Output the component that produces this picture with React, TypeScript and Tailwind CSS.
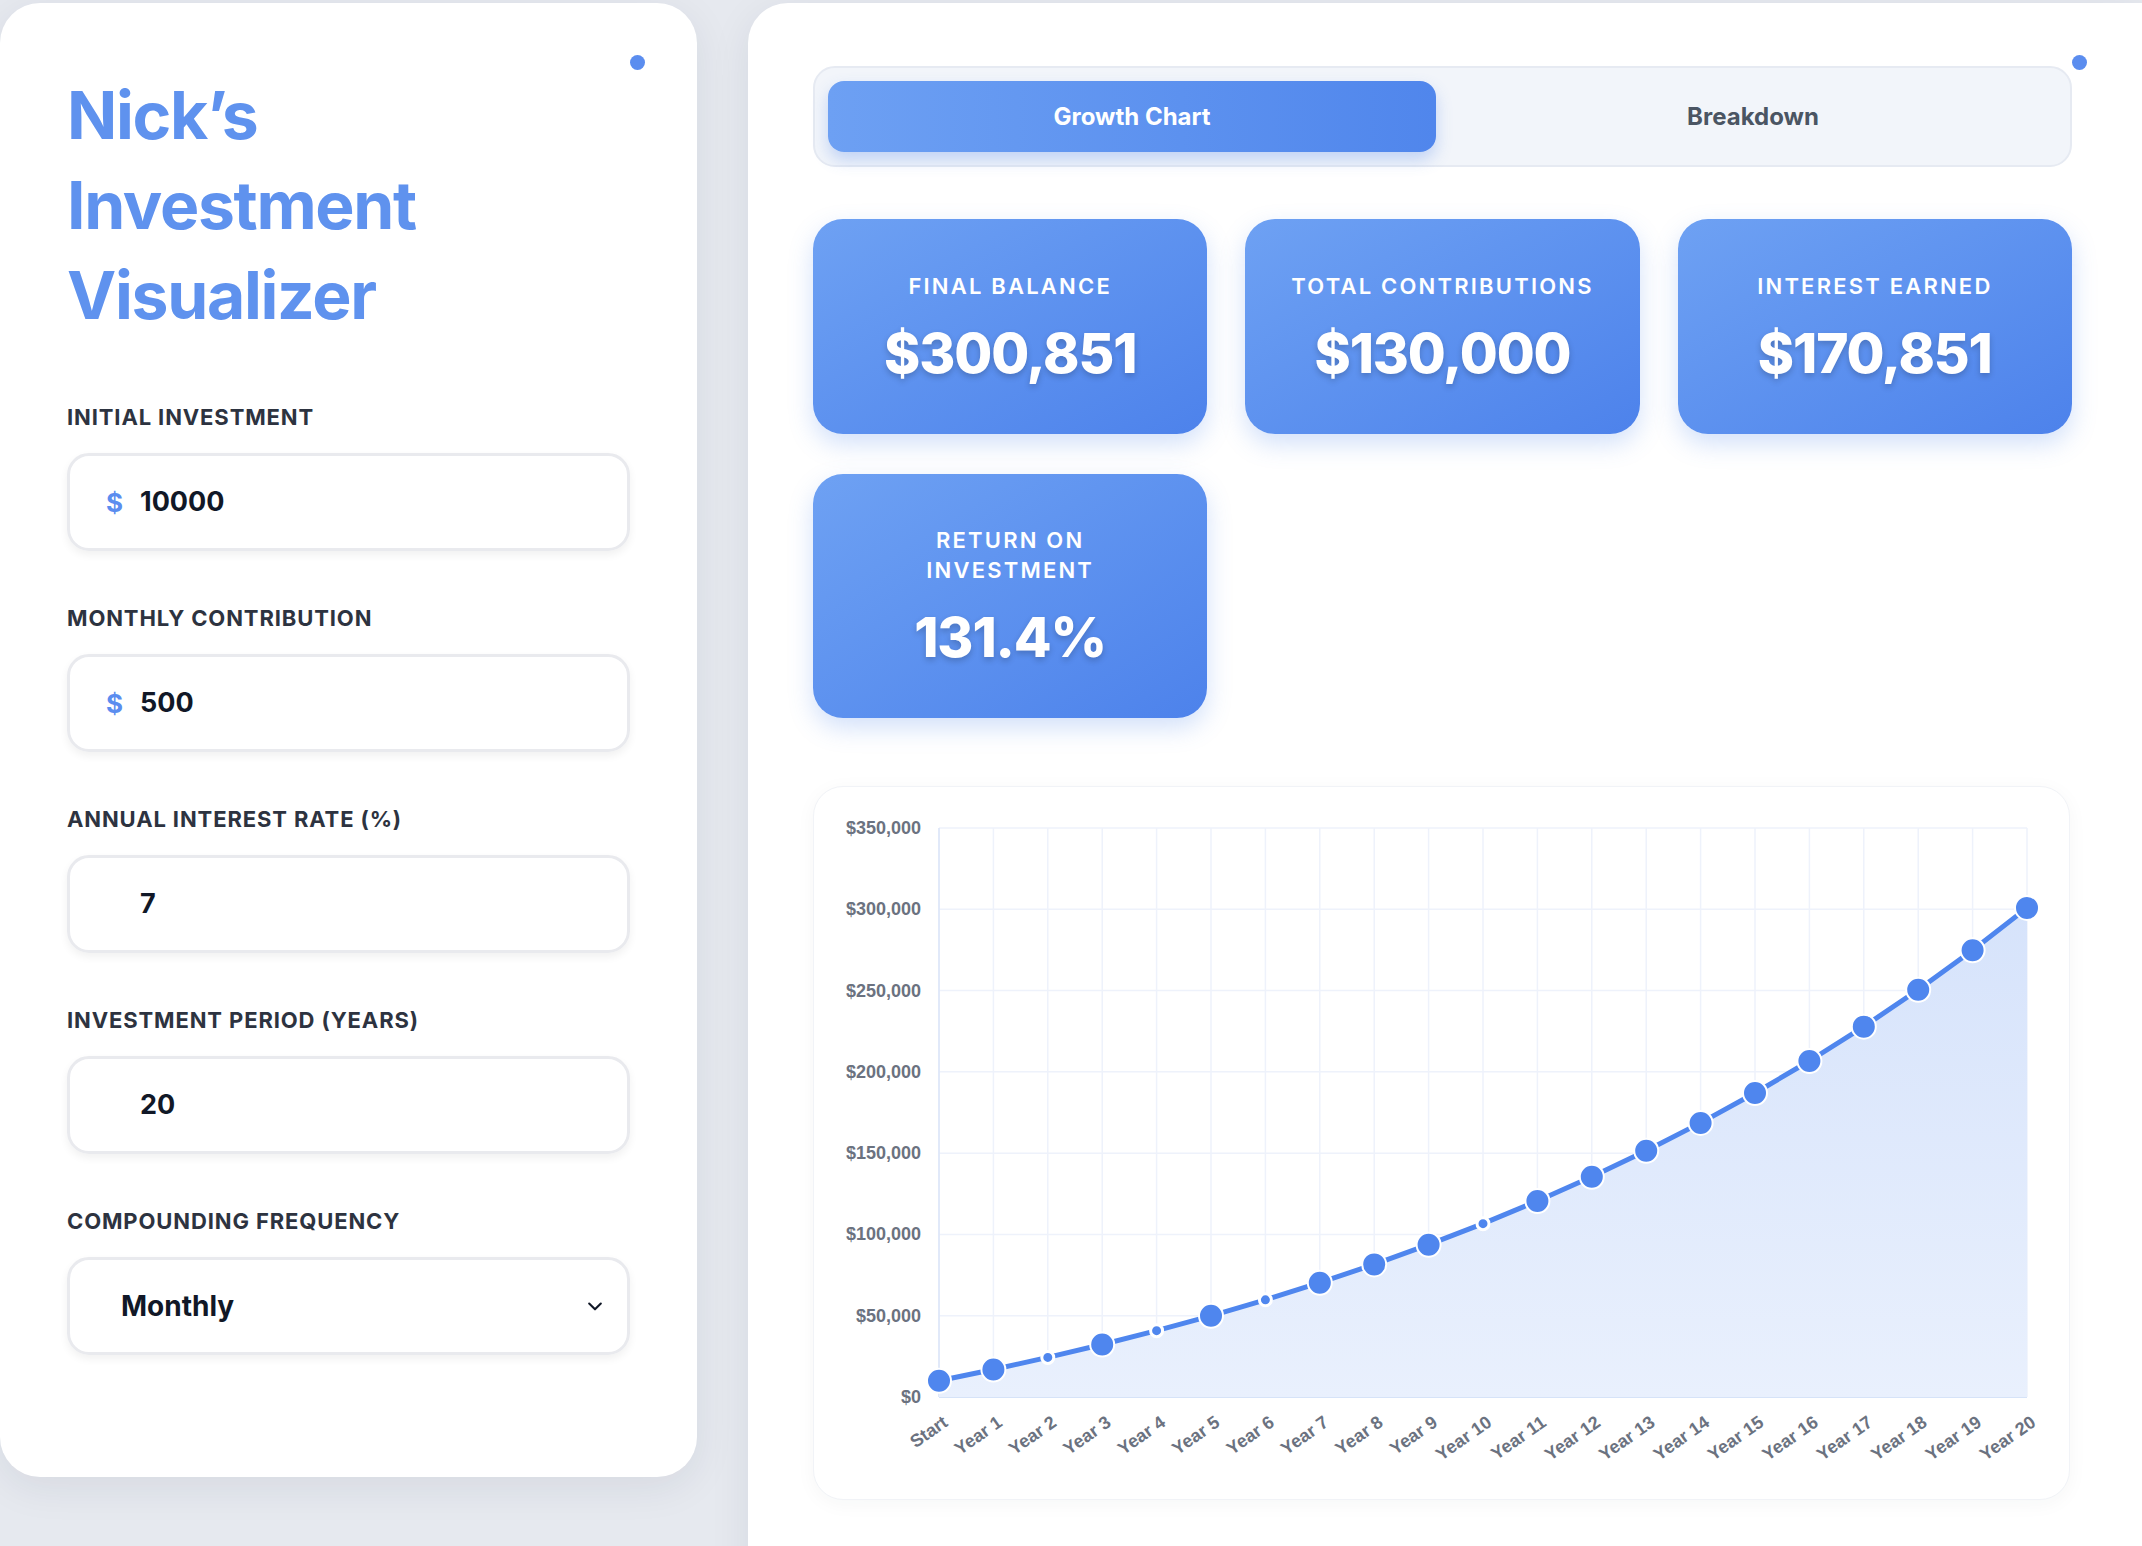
import React from 'react'

const font = { fontFamily: 'Inter, "Noto Sans", sans-serif' }

const fields = [
  { label: 'Initial Investment', value: '10000', dollar: true },
  { label: 'Monthly Contribution', value: '500', dollar: true },
  { label: 'Annual Interest Rate (%)', value: '7', dollar: false },
  { label: 'Investment Period (Years)', value: '20', dollar: false },
]

const stats = [
  { label: 'Final Balance', value: '$300,851' },
  { label: 'Total Contributions', value: '$130,000' },
  { label: 'Interest Earned', value: '$170,851' },
  { label: 'Return on Investment', value: '131.4%' },
]

function balanceAt(year: number) {
  const r = 0.07 / 12
  const n = year * 12
  const g = Math.pow(1 + r, n)
  return 10000 * g + 500 * ((g - 1) / r)
}

function Chart() {
  const W = 1257
  const H = 714
  const x0 = 125
  const x1 = 1213
  const yTop = 41
  const yBot = 610
  const max = 350000
  const pts = Array.from({ length: 21 }, (_, i) => ({
    x: x0 + ((x1 - x0) * i) / 20,
    y: yBot - ((yBot - yTop) * balanceAt(i)) / max,
    label: i === 0 ? 'Start' : `Year ${i}`,
    small: [2, 4, 6, 10].includes(i),
  }))
  const line = pts.map((p, i) => `${i ? 'L' : 'M'}${p.x.toFixed(1)},${p.y.toFixed(1)}`).join(' ')
  const area = `${line} L${x1},${yBot} L${x0},${yBot} Z`
  const ticks = [0, 50000, 100000, 150000, 200000, 250000, 300000, 350000]
  return (
    <svg width={W} height={H} viewBox={`0 0 ${W} ${H}`}>
      <defs>
        <linearGradient id="fill" x1="0" y1="0" x2="0" y2="1">
          <stop offset="0" stopColor="#d6e3fb" />
          <stop offset="1" stopColor="#e9f0fd" />
        </linearGradient>
      </defs>
      {ticks.map((t) => {
        const y = yBot - ((yBot - yTop) * t) / max
        return (
          <g key={t}>
            <line x1={x0} x2={x1} y1={y} y2={y} stroke="#eef2fb" strokeWidth="1.5" />
            <text x={107} y={y + 6} textAnchor="end" fontSize="18" fontWeight="700" fill="#6b7280" style={{ fontFamily: '"Liberation Sans", Arial, sans-serif' }}>
              ${t.toLocaleString('en-US')}
            </text>
          </g>
        )
      })}
      {pts.map((p) => (
        <line key={p.label} x1={p.x} x2={p.x} y1={yTop} y2={yBot} stroke="#eef2fb" strokeWidth="1.5" />
      ))}
      <line x1={x0} x2={x0} y1={yTop} y2={yBot} stroke="#dbe5f8" strokeWidth="1.5" />
      <line x1={x0} x2={x1} y1={yBot} y2={yBot} stroke="#cddcf7" strokeWidth="1.5" />
      <path d={area} fill="url(#fill)" />
      <path d={line} fill="none" stroke="#4f86ee" strokeWidth="5" strokeLinejoin="round" />
      {pts.map((p) =>
        p.small ? (
          <circle key={p.label} cx={p.x} cy={p.y} r="6" fill="#4f86ee" stroke="#fff" strokeWidth="3" />
        ) : (
          <circle key={p.label} cx={p.x} cy={p.y} r="12" fill="#4f86ee" stroke="#fff" strokeWidth="2" />
        )
      )}
      {pts.map((p) => (
        <text
          key={p.label}
          x={p.x + 10}
          y={yBot + 28}
          textAnchor="end"
          fontSize="18"
          fontWeight="700"
          fill="#6b7280"
          transform={`rotate(-35 ${p.x + 10} ${yBot + 28})`}
          style={{ fontFamily: '"Liberation Sans", Arial, sans-serif' }}
        >
          {p.label}
        </text>
      ))}
    </svg>
  )
}

export default function App() {
  return (
    <div className="w-[2142px] h-[1546px] overflow-hidden bg-[#e6e9ef] flex gap-[51px] pt-[3px]" style={font}>
      {/* Form panel */}
      <div className="relative w-[697px] h-[1474px] shrink-0 bg-white rounded-[40px] shadow-[0_10px_40px_rgba(30,41,59,0.08)] px-[67px] pt-[67px]">
        <span className="absolute top-[52px] right-[52px] w-[15px] h-[15px] rounded-full bg-[#5b8def]" />
        <h1 className="text-[#5f92ee] text-[66px] leading-[90px] font-bold tracking-[-0.02em]">
          Nick’s
          <br />
          Investment
          <br />
          Visualizer
        </h1>
        <div className="mt-[64px] flex flex-col gap-[54px]">
          {fields.map((f) => (
            <div key={f.label}>
              <p className="text-[#2d3340] text-[22px] leading-[26px] font-bold uppercase tracking-[0.04em] mb-[23px]">
                {f.label}
              </p>
              <div className="h-[98px] w-[563px] rounded-[22px] border-[3px] border-[#e9eaee] shadow-[0_4px_8px_rgba(0,0,0,0.06)] flex items-center px-[36px]">
                <span className="w-[34px] text-[#5b8def] text-[26px] font-bold">{f.dollar ? '$' : ''}</span>
                <span className="text-[#111827] text-[27px] font-bold">{f.value}</span>
              </div>
            </div>
          ))}
          <div>
            <p className="text-[#2d3340] text-[22px] leading-[26px] font-bold uppercase tracking-[0.04em] mb-[23px]">
              Compounding Frequency
            </p>
            <div className="h-[98px] w-[563px] rounded-[22px] border-[3px] border-[#e9eaee] shadow-[0_4px_8px_rgba(0,0,0,0.06)] flex items-center justify-between pl-[51px] pr-[22px]">
              <span className="text-[#111827] text-[28px] font-bold">Monthly</span>
              <svg width="20" height="20" viewBox="0 0 24 24" fill="none" stroke="#111827" strokeWidth="2.5" strokeLinecap="round" strokeLinejoin="round">
                <path d="M5 9l7 7 7-7" />
              </svg>
            </div>
          </div>
        </div>
      </div>

      {/* Results panel */}
      <div className="relative flex-1 h-[1600px] bg-white rounded-tl-[40px] shadow-[0_10px_40px_rgba(30,41,59,0.08)] pl-[65px] pr-[70px] pt-[63px]">
        <span className="absolute top-[52px] right-[55px] w-[15px] h-[15px] rounded-full bg-[#5b8def]" />
        <div className="w-[1259px] h-[101px] rounded-[22px] bg-[#f2f5fa] border-2 border-[#e6eaf2] flex items-center px-[13px] gap-[13px]">
          <div className="flex-1 h-[71px] rounded-[16px] bg-gradient-to-r from-[#6da0f3] to-[#5086ec] shadow-[0_8px_16px_rgba(79,134,236,0.3)] flex items-center justify-center text-white text-[24px] font-bold">
            Growth Chart
          </div>
          <div className="flex-1 h-[71px] flex items-center justify-center text-[#4b5563] text-[24px] font-bold">
            Breakdown
          </div>
        </div>

        <div className="mt-[52px] w-[1259px] grid grid-cols-3 gap-x-[38px] gap-y-[40px]">
          {stats.map((s, i) => (
            <div
              key={s.label}
              className={`rounded-[30px] bg-gradient-to-br from-[#6ea1f3] to-[#4d82eb] shadow-[0_10px_24px_rgba(79,134,236,0.25)] flex flex-col items-center justify-center text-white text-center ${i === 3 ? 'h-[244px]' : 'h-[215px]'}`}
            >
              <p className={`text-[22px] leading-[30px] font-semibold uppercase tracking-[0.1em] ${i === 3 ? 'w-[200px]' : ''}`}>
                {s.label}
              </p>
              <p className="mt-[22px] text-[55px] leading-[60px] font-extrabold tracking-[-0.02em] [text-shadow:0_3px_6px_rgba(0,0,0,0.2)]">
                {s.value}
              </p>
            </div>
          ))}
        </div>

        <div className="mt-[68px] w-[1257px] h-[714px] rounded-[30px] bg-white border border-[#f1f3f7] shadow-[0_4px_20px_rgba(30,41,59,0.04)]">
          <Chart />
        </div>
      </div>
    </div>
  )
}
